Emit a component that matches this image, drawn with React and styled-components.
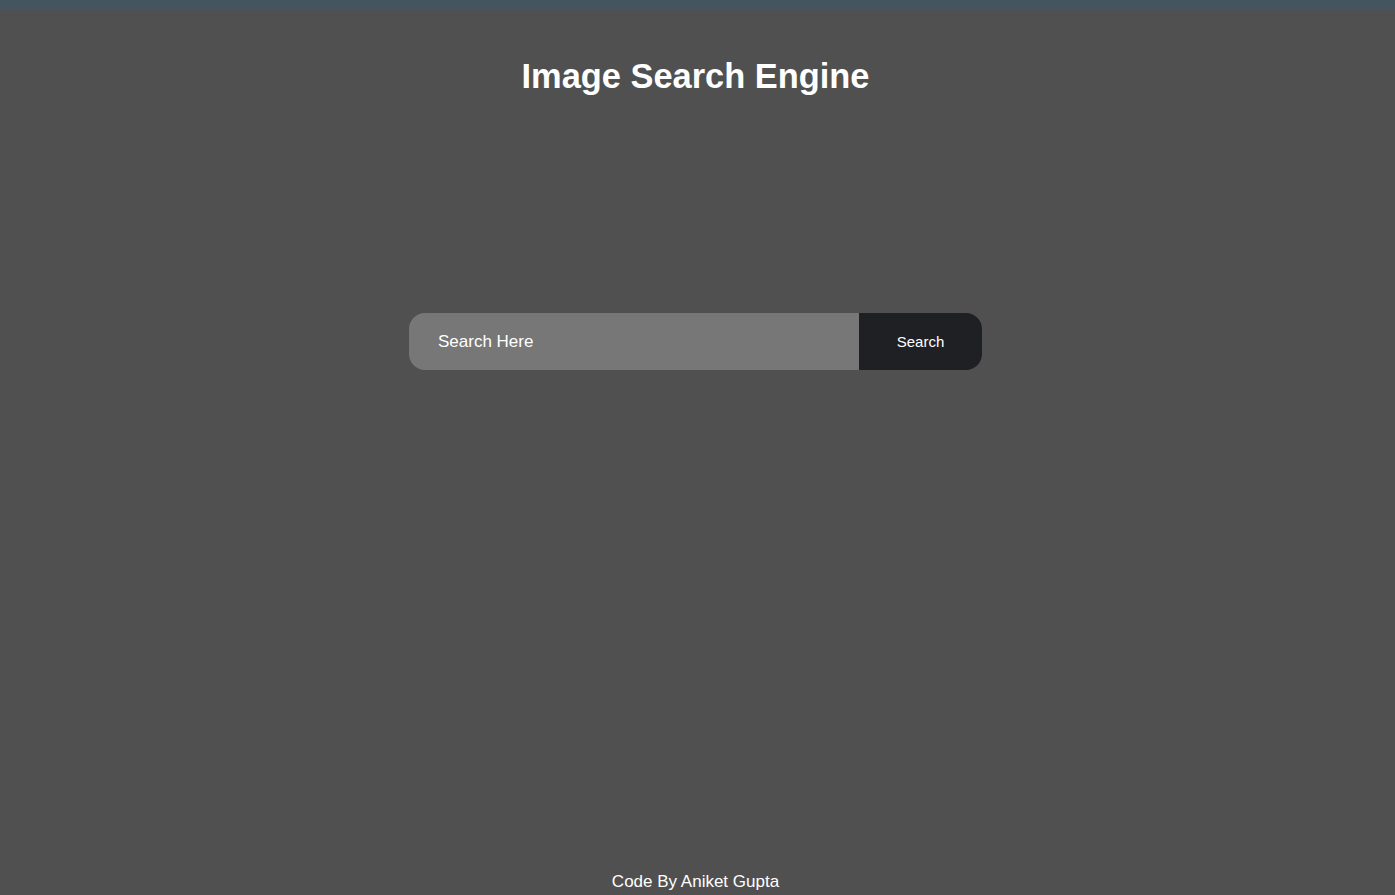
import React from "react";
import styled, { createGlobalStyle } from "styled-components";

const Global = createGlobalStyle`
  html, body { margin: 0; padding: 0; }
  body {
    background: #505050;
    font-family: "Liberation Sans", Arial, sans-serif;
    color: #fff;
  }
  * { box-sizing: border-box; }
`;

const Page = styled.div`
  min-height: 895px;
  display: flex;
  flex-direction: column;
  align-items: center;
  border-top: 10px solid #44555f;
  padding-right: 4px;
`;

const Title = styled.h1`
  margin: 44px 0 0;
  font-size: 34.4px;
  font-weight: 700;
  line-height: 44px;
  color: #fff;
`;

const Form = styled.form`
  margin-top: 215px;
  display: flex;
  width: 573px;
  height: 57px;
  border-radius: 16px;
  overflow: hidden;
`;

const Input = styled.input`
  flex: 0 0 450px;
  border: none;
  outline: none;
  background: #777777;
  color: #fff;
  font-family: inherit;
  font-size: 17px;
  padding: 0 29px;
  &::placeholder { color: #fff; opacity: 1; }
`;

const Button = styled.button`
  flex: 1;
  border: none;
  background: #1f2024;
  color: #fff;
  font-family: inherit;
  font-size: 15px;
  cursor: pointer;
`;

const Spacer = styled.div`
  flex: 1;
`;

const Footer = styled.footer`
  font-size: 17px;
  line-height: 20px;
  padding-bottom: 3px;
`;

export default function App() {
  return (
    <>
      <Global />
      <Page>
        <Title>Image Search Engine</Title>
        <Form onSubmit={(e) => e.preventDefault()}>
          <Input type="text" placeholder="Search Here" />
          <Button type="submit">Search</Button>
        </Form>
        <Spacer />
        <Footer>Code By Aniket Gupta</Footer>
      </Page>
    </>
  );
}
